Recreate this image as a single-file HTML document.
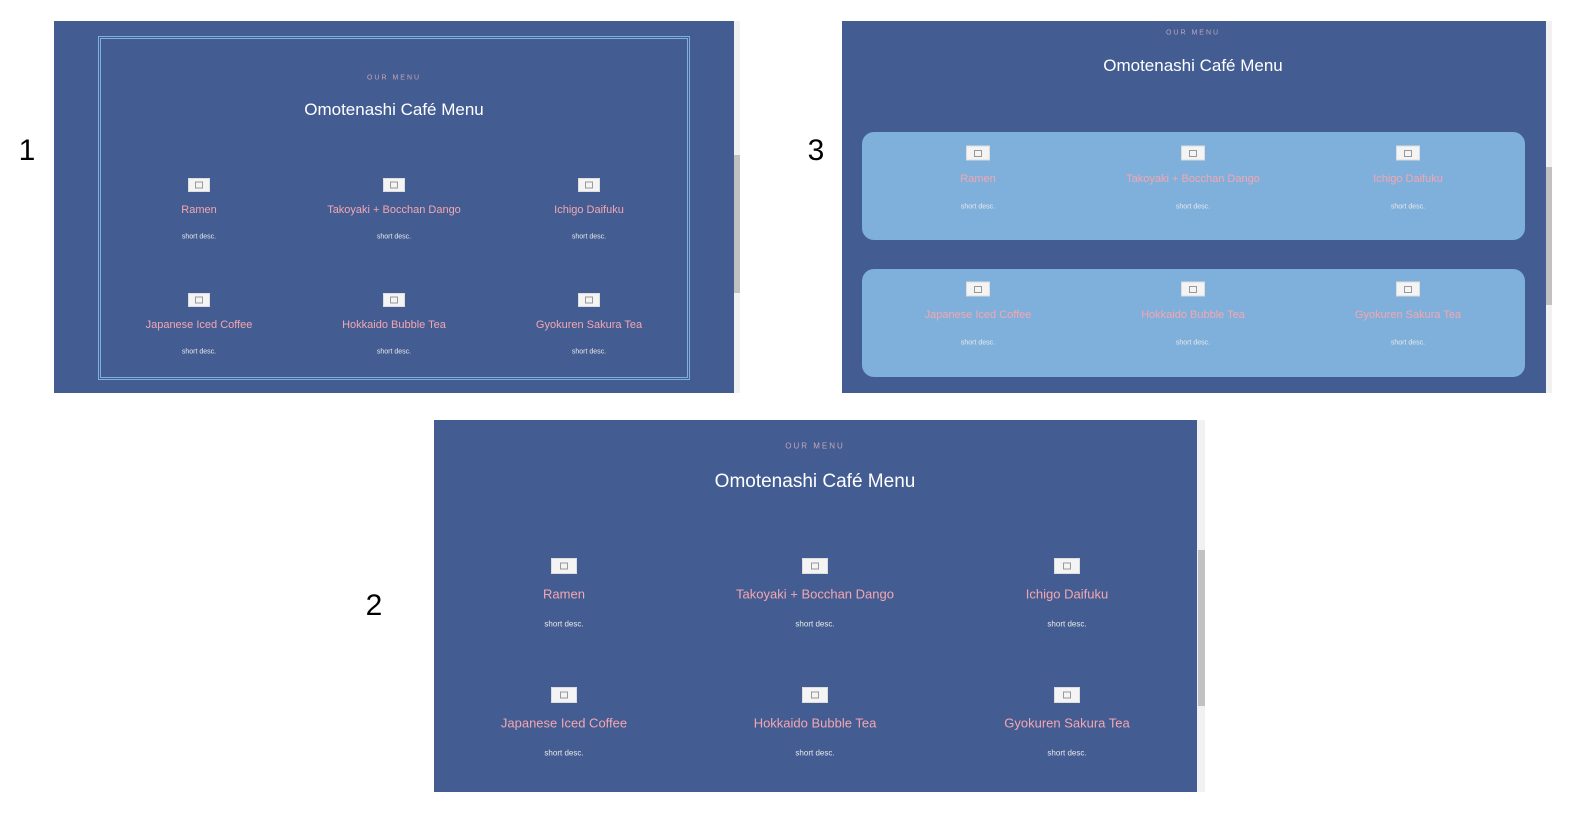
<!DOCTYPE html><html><head><meta charset="utf-8"><style>
body{margin:0;width:1582px;height:814px;background:#fff;position:relative;overflow:hidden;font-family:"Liberation Sans",sans-serif}
.a{position:absolute}
.p{position:absolute;background:#435d93}
.sb{position:absolute;background:#f1f1f1}
.th{position:absolute;background:#c1c1c1}
.t{position:absolute;transform:translate(-50%,-50%);white-space:nowrap;text-align:center}
.om{color:#c9a3b5;letter-spacing:2px}
.h{color:#fff}
.n{color:#f4a6b0}
.d{color:#e8e8e8}
.i{position:absolute;transform:translate(-50%,-50%);background:#f4f4f4;border:1px solid #ddd;box-sizing:border-box}
.i:after{content:"";position:absolute;left:50%;top:50%;width:6px;height:5px;border:1px solid #999;transform:translate(-50%,-50%)}
.num{position:absolute;font-size:30px;color:#000;transform:translate(-50%,-50%)}
.c{position:absolute;background:#7fb0dc;border-radius:12px}
</style></head><body>
<div class="num" style="left:27px;top:151px">1</div>
<div class="num" style="left:816px;top:151px">3</div>
<div class="num" style="left:374px;top:606px">2</div>

<div class="p" style="left:54px;top:21px;width:680px;height:372px"></div>
<div class="sb" style="left:734px;top:21px;width:6px;height:372px"></div>
<div class="th" style="left:734px;top:155px;width:6px;height:138px"></div>
<div class="a" style="left:98px;top:36px;width:586px;height:338px;border:3px double #7fb0dc"></div>
<div class="t om" style="left:394px;top:78px;font-size:7px">OUR MENU</div>
<div class="t h" style="left:394px;top:110px;font-size:17px">Omotenashi Café Menu</div>

<div class="p" style="left:842px;top:21px;width:704px;height:372px"></div>
<div class="sb" style="left:1546px;top:21px;width:6px;height:372px"></div>
<div class="th" style="left:1546px;top:167px;width:6px;height:138px"></div>
<div class="t om" style="left:1193px;top:33px;font-size:7px">OUR MENU</div>
<div class="t h" style="left:1193px;top:66px;font-size:17px">Omotenashi Café Menu</div>
<div class="c" style="left:862px;top:132px;width:663px;height:108px"></div>
<div class="c" style="left:862px;top:269px;width:663px;height:108px"></div>

<div class="p" style="left:434px;top:420px;width:763px;height:372px"></div>
<div class="sb" style="left:1197px;top:420px;width:8px;height:372px"></div>
<div class="th" style="left:1198px;top:550px;width:7px;height:156px"></div>
<div class="t om" style="left:815px;top:446px;font-size:8px">OUR MENU</div>
<div class="t h" style="left:815px;top:482px;font-size:19px">Omotenashi Café Menu</div>

<div id="items"></div>
<script>
var names=["Ramen","Takoyaki + Bocchan Dango","Ichigo Daifuku","Japanese Iced Coffee","Hokkaido Bubble Tea","Gyokuren Sakura Tea"];
var P=[
 {x:[199,394,589],r:[[185,210,237],[300,325,352]],iw:22,ih:14,fs:11,ds:7},
 {x:[978,1193,1408],r:[[153,179,207],[289,315,343]],iw:24,ih:15,fs:11,ds:7},
 {x:[564,815,1067],r:[[566,594,624],[695,723,753]],iw:26,ih:16,fs:13,ds:8}];
var h="";
P.forEach(function(p){p.r.forEach(function(r,ri){p.x.forEach(function(x,ci){
 h+='<div class="i" style="left:'+x+'px;top:'+r[0]+'px;width:'+p.iw+'px;height:'+p.ih+'px"></div>';
 h+='<div class="t n" style="left:'+x+'px;top:'+r[1]+'px;font-size:'+p.fs+'px">'+names[ri*3+ci]+'</div>';
 h+='<div class="t d" style="left:'+x+'px;top:'+r[2]+'px;font-size:'+p.ds+'px">short desc.</div>';
});});});
document.getElementById("items").innerHTML=h;
</script>
</body></html>
